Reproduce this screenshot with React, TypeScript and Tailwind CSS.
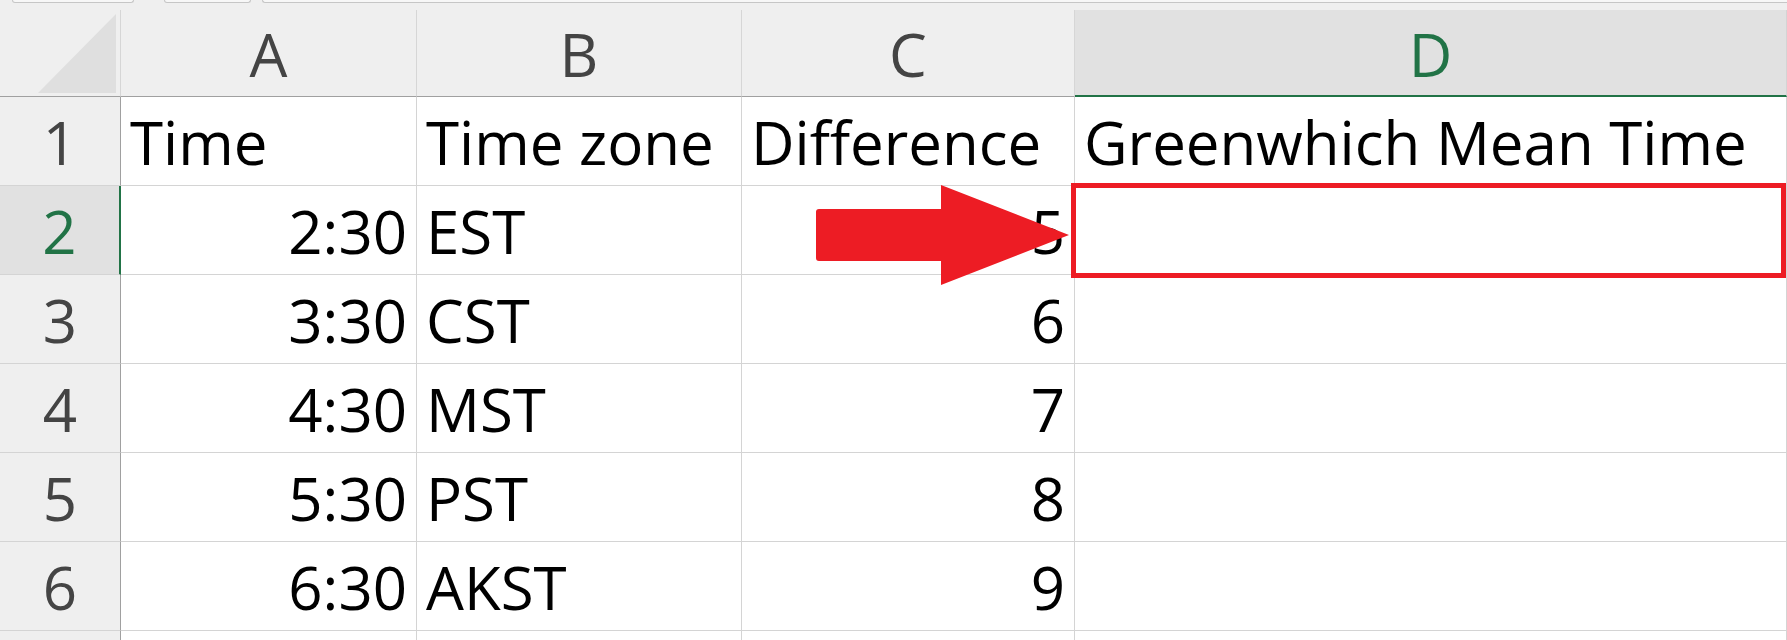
const font = { fontFamily: '"Open Sans", "Noto Sans", sans-serif' };

const cols = ["A", "B", "C", "D"];

const rows: string[][] = [
  ["Time", "Time zone", "Difference", "Greenwhich Mean Time"],
  ["2:30", "EST", "5", ""],
  ["3:30", "CST", "6", ""],
  ["4:30", "MST", "7", ""],
  ["5:30", "PST", "8", ""],
  ["6:30", "AKST", "9", ""],
  ["", "", "", ""],
];

function HeaderCell({ label }: { label: string }) {
  const active = label === "D";
  return (
    <div
      className={
        active
          ? "flex items-end justify-center border-b-2 border-r border-b-[#217346] border-r-[#d4d4d4] bg-[#e1e1e1] pb-[11px] text-[60px] leading-none text-[#217346]"
          : "flex items-end justify-center border-b border-r border-b-[#a0a0a0] border-r-[#d6d6d6] bg-[#efefef] pb-[12px] text-[60px] leading-none text-[#444444]"
      }
    >
      {label}
    </div>
  );
}

function RowHeader({ n }: { n: number }) {
  const active = n === 2;
  return (
    <div
      className={
        active
          ? "flex items-end justify-center border-b border-r-2 border-b-[#d4d4d4] border-r-[#217346] bg-[#e1e1e1] pb-[13px] text-[60px] leading-none text-[#217346]"
          : "flex items-end justify-center border-b border-r border-b-[#d4d4d4] border-r-[#a0a0a0] bg-[#efefef] pb-[13px] text-[60px] leading-none text-[#444444]"
      }
    >
      {/* row 7 is only a sliver at the bottom, its number is out of view */}
      {n <= 6 ? n : null}
    </div>
  );
}

function Cell({ value, right }: { value: string; right: boolean }) {
  return (
    <div
      className={`flex items-end overflow-visible whitespace-nowrap border-b border-r border-[#d4d4d4] bg-white pb-[13px] text-[60px] leading-none text-black ${
        right ? "justify-end pr-[9px]" : "justify-start pl-[9px]"
      }`}
    >
      {value}
    </div>
  );
}

export default function App() {
  return (
    <div className="relative h-[640px] w-[1787px] overflow-hidden bg-[#efefef]" style={font}>
      {/* remnants of the formula bar above the sheet */}
      <div className="flex h-[10px] items-start">
        <div className="ml-[12px] h-[3px] w-[122px] rounded-b-[4px] border-x border-b border-[#c6c6c6] bg-[#f7f7f7]" />
        <div className="ml-[30px] h-[3px] w-[87px] rounded-b-[4px] border-x border-b border-[#c6c6c6] bg-[#f7f7f7]" />
        <div className="ml-[11px] h-[3px] flex-1 rounded-bl-[4px] border-b border-l border-[#c6c6c6] bg-[#f7f7f7]" />
      </div>

      <div className="grid grid-cols-[121px_296px_325px_333px_1fr] grid-rows-[87px_89px_89px_89px_89px_89px_89px_89px]">
        <div className="relative border-b border-r border-b-[#a0a0a0] border-r-[#d6d6d6] bg-[#efefef]">
          <svg className="absolute inset-0" width="121" height="87" viewBox="0 0 121 87">
            <polygon points="38,83 116,83 116,4" fill="#dfdfdf" />
          </svg>
        </div>
        {cols.map((c) => (
          <HeaderCell key={c} label={c} />
        ))}

        {rows.map((r, i) => (
          <div key={i} className="contents">
            <RowHeader n={i + 1} />
            {r.map((v, j) => (
              <Cell key={j} value={v} right={i > 0 && (j === 0 || j === 2)} />
            ))}
          </div>
        ))}
      </div>

      {/* annotation: arrow pointing to D2 */}
      <svg className="absolute left-0 top-0" width="1787" height="640" viewBox="0 0 1787 640">
        <path
          d="M819 209 L941 209 L941 185 L1069 235 L941 285 L941 261 L819 261 Q816 261 816 258 L816 212 Q816 209 819 209 Z"
          fill="#ed1c24"
        />
      </svg>
      <div className="absolute left-[1071px] top-[183px] h-[95px] w-[715px] border-[5px] border-[#ed1c24]" />
    </div>
  );
}
